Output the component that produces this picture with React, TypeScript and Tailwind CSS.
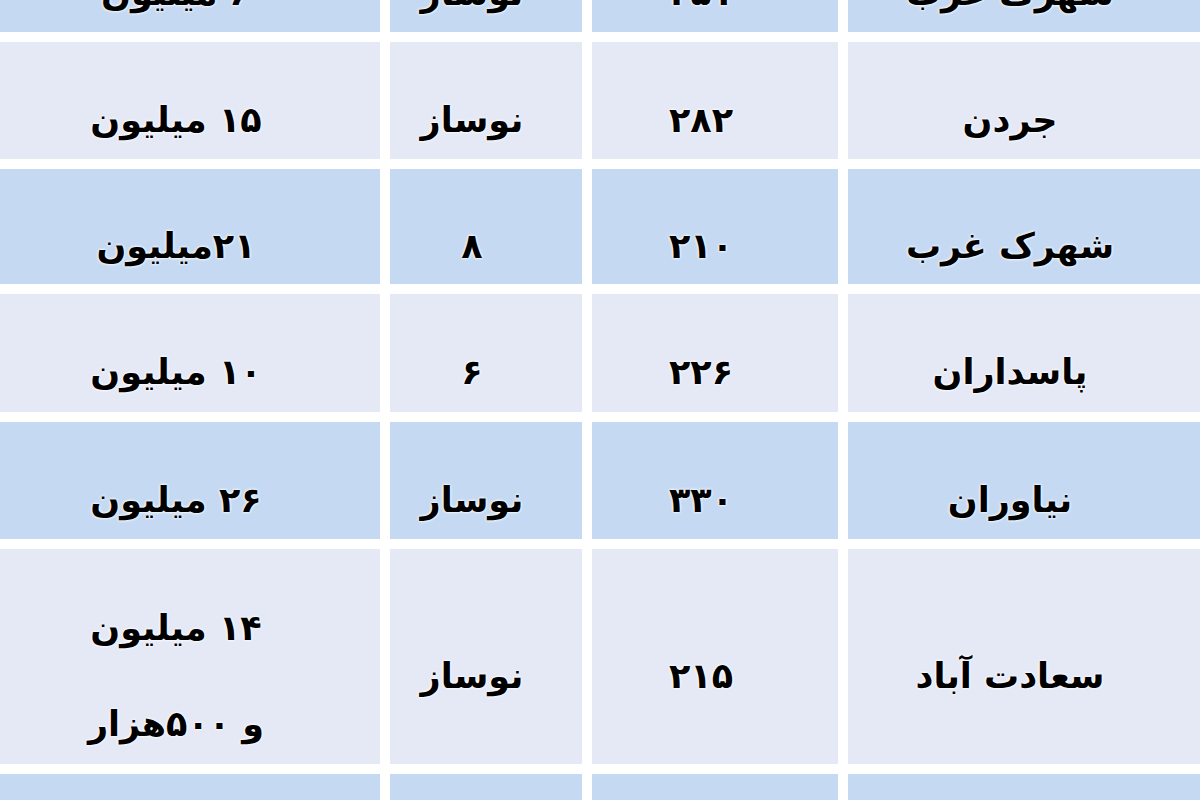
const rows = [
  { price: ["۶ میلیون"], age: "نوساز", area: "۲۵۱", place: "شهرک غرب", h: "h-[117px]" },
  { price: ["۱۵ میلیون"], age: "نوساز", area: "۲۸۲", place: "جردن", h: "h-[117px]" },
  { price: ["۲۱میلیون"], age: "۸", area: "۲۱۰", place: "شهرک غرب", h: "h-[115px]" },
  { price: ["۱۰ میلیون"], age: "۶", area: "۲۲۶", place: "پاسداران", h: "h-[118px]" },
  { price: ["۲۶ میلیون"], age: "نوساز", area: "۳۳۰", place: "نیاوران", h: "h-[117px]" },
  { price: ["۱۴ میلیون", "و ۵۰۰هزار"], age: "نوساز", area: "۲۱۵", place: "سعادت آباد", h: "h-[215px]" },
  { price: [""], age: "", area: "", place: "", h: "h-[117px]" },
];

const Cell = ({ bg, h, children }: { bg: string; h: string; children: React.ReactNode }) => (
  <div
    dir="rtl"
    className={`${bg} ${h} flex flex-col items-center justify-center pr-[28px] pt-[38px] text-[35px] font-bold leading-[52px] text-black [text-shadow:0_0_3px_#fff,0_0_3px_#fff]`}
  >
    {children}
  </div>
);

export default function App() {
  return (
    <div className="w-[1200px] h-[800px] overflow-hidden bg-white" style={{ fontFamily: '"DejaVu Sans", sans-serif' }}>
      <div className="-mt-[85px] grid grid-cols-[380px_192px_246px_1fr] gap-[10px]">
        {rows.map((r, i) => {
          const bg = i % 2 === 0 ? "bg-[#c5daf2]" : "bg-[#e5e9f6]";
          return (
            <>
              <Cell key={`p${i}`} bg={bg} h={r.h}>
                {r.price.map((t, j) => (
                  <div key={j} className={j === 1 ? "mt-[44px]" : ""}>{t}</div>
                ))}
              </Cell>
              <Cell key={`a${i}`} bg={bg} h={r.h}>{r.age}</Cell>
              <Cell key={`s${i}`} bg={bg} h={r.h}>{r.area}</Cell>
              <Cell key={`n${i}`} bg={bg} h={r.h}>{r.place}</Cell>
            </>
          );
        })}
      </div>
    </div>
  );
}
